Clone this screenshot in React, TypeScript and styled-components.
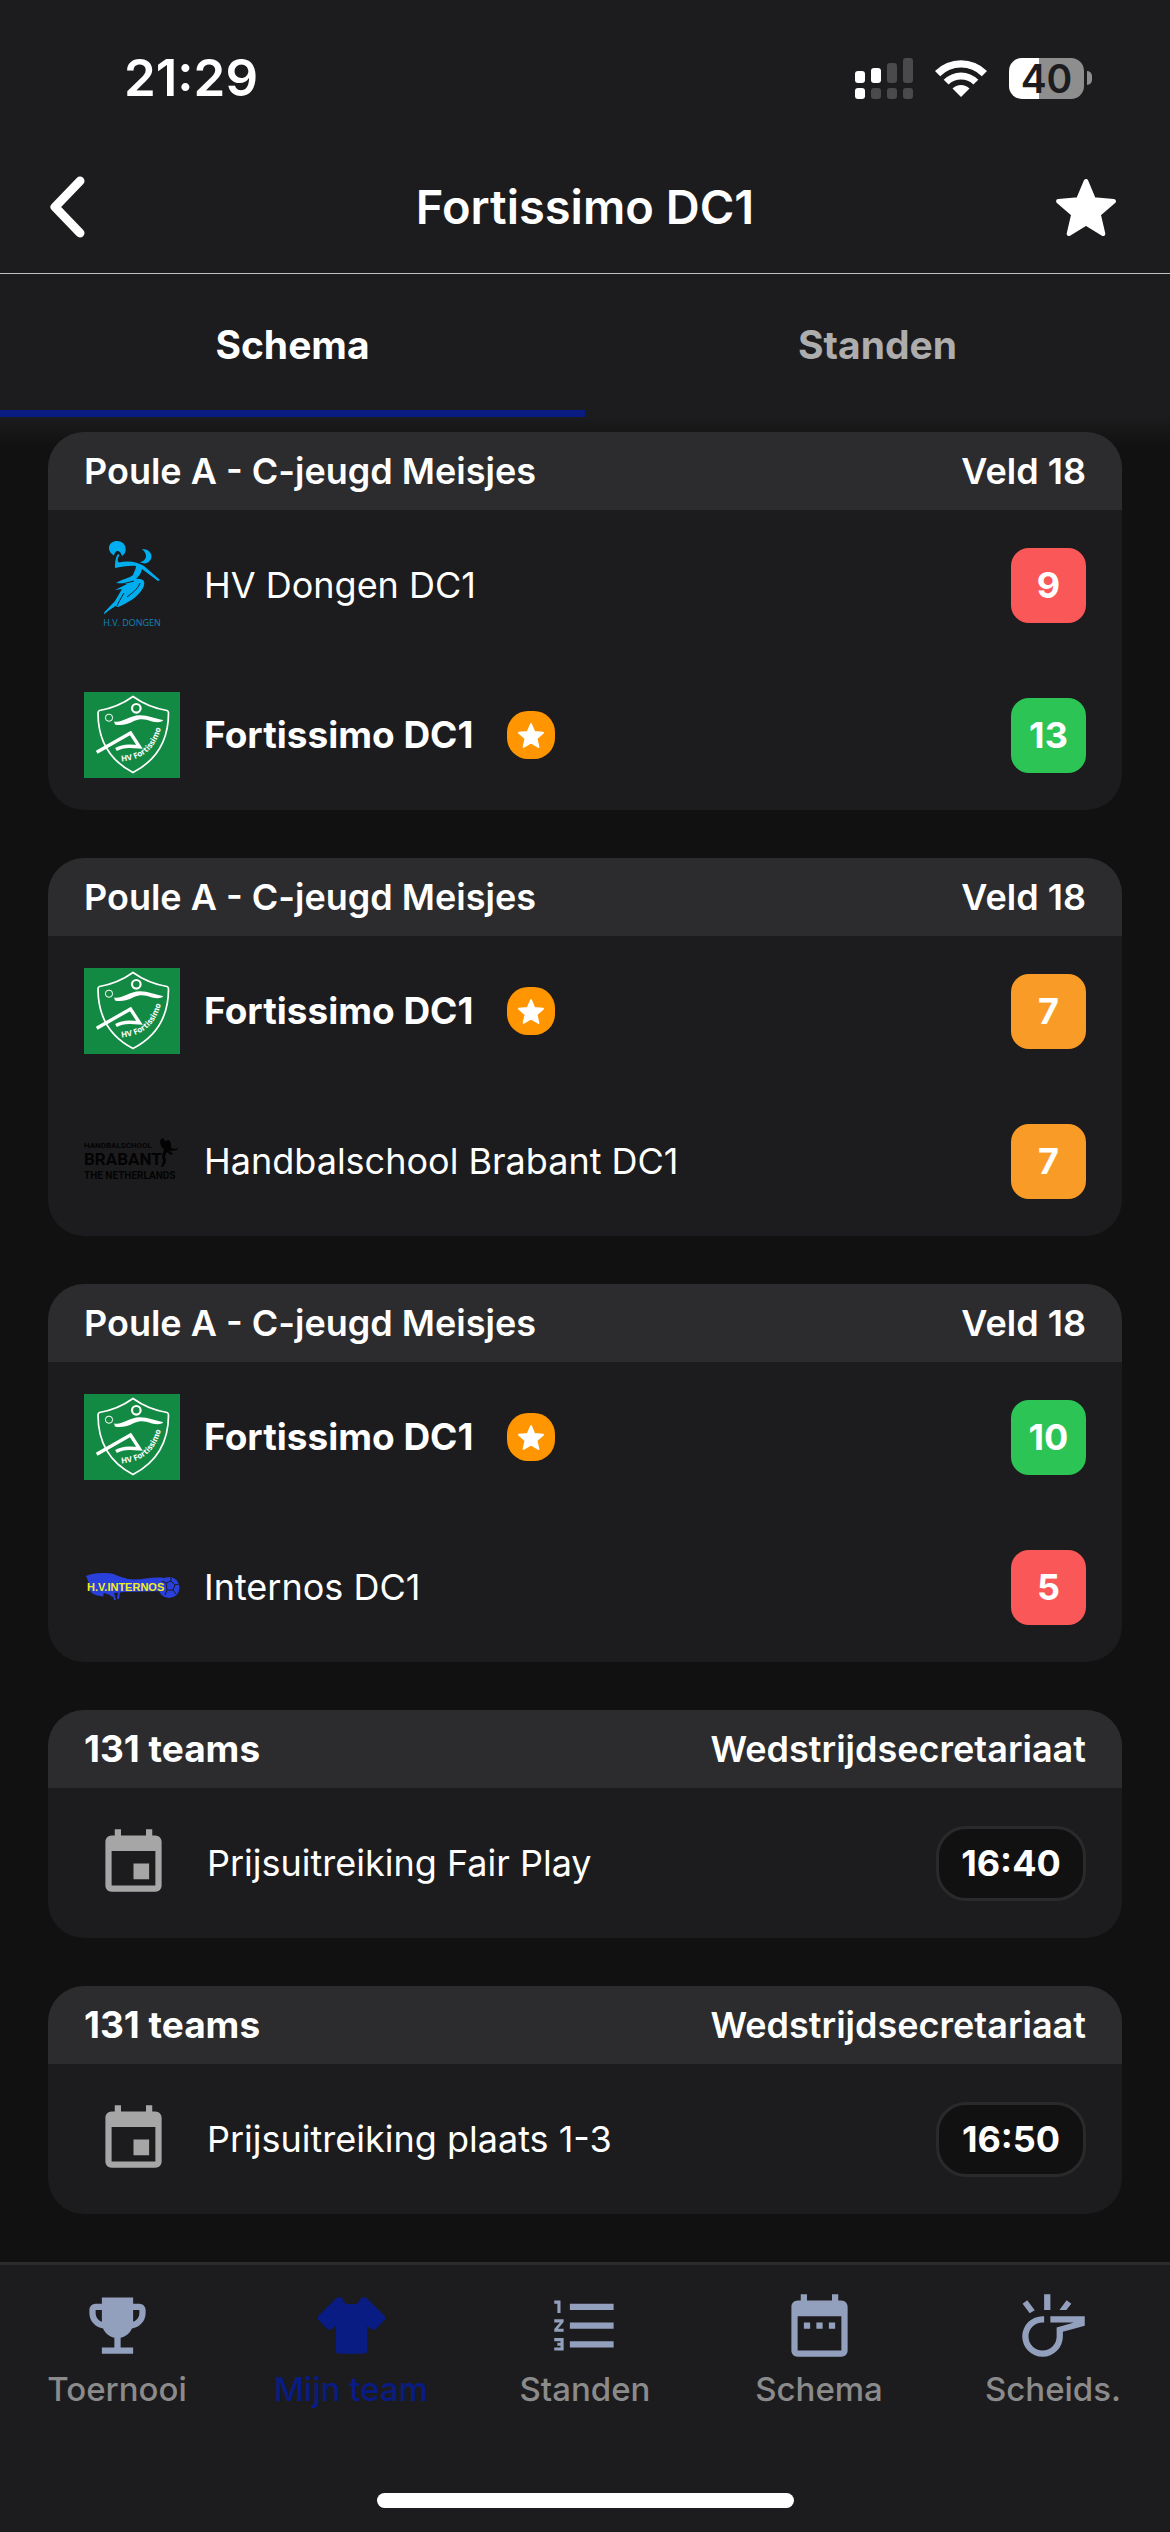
import React from "react";
import styled, { createGlobalStyle } from "styled-components";

const color = {
  page: "#111111",
  surface: "#1c1c1e",
  raised: "#2c2c2e",
  accent: "#081c84",
  text: "#ffffff",
  muted: "#adadad",
  navText: "#8b8b8b",
  navIcon: "#93a0bd",
};

const GlobalStyle = createGlobalStyle`
  * { box-sizing: border-box; }
  body {
    margin: 0;
    background: ${color.page};
    color: ${color.text};
    font-family: Inter, "Liberation Sans", sans-serif;
    font-size: 36px;
    line-height: 48px;
  }
  button {
    margin: 0;
    padding: 0;
    border: 0;
    background: none;
    color: inherit;
    font: inherit;
    cursor: pointer;
  }
  svg { display: block; flex: none; }
`;

const Screen = styled.div`
  display: flex;
  flex-direction: column;
  min-height: 100vh;
`;

const Header = styled.header`
  background: ${color.surface};
  border-bottom: 1px solid #c0c0c0;
`;

const StatusBar = styled.div`
  display: flex;
  align-items: center;
  justify-content: space-between;
  padding: 48px 78px 33px 124px;
`;

const Clock = styled.time`
  font-size: 51px;
  line-height: 60px;
  font-weight: 600;
`;

const StatusIcons = styled.div`
  display: flex;
  align-items: center;
  gap: 22px;
`;

const Battery = styled.div`
  display: flex;
  align-items: center;
  gap: 3px;
`;

const BatteryLevel = styled.span<{ $level: number }>`
  width: 75px;
  border-radius: 13px;
  background: linear-gradient(90deg, #fff ${(p) => p.$level}%, #8e8e8e ${(p) => p.$level}%);
  color: ${color.surface};
  font-size: 39px;
  line-height: 41px;
  font-weight: 600;
  text-align: center;
`;

const BatteryTip = styled.span`
  width: 5px;
  height: 14px;
  border-radius: 0 7px 7px 0;
  background: #8e8e8e;
`;

const TitleBar = styled.div`
  display: grid;
  grid-template-columns: 72px 1fr 72px;
  align-items: center;
  height: 132px;
  padding: 0 48px;
`;

const Title = styled.h1`
  margin: 0;
  font-size: 47px;
  line-height: 60px;
  font-weight: 600;
  text-align: center;
`;

const IconButton = styled.button<{ $end?: boolean }>`
  display: flex;
  align-items: center;
  justify-content: ${(p) => (p.$end ? "flex-end" : "flex-start")};
  padding-right: ${(p) => (p.$end ? "6px" : "0")};
  height: 72px;
`;

const Tabs = styled.div`
  display: flex;
  background: ${color.surface};
`;

const Tab = styled.button<{ $active?: boolean }>`
  flex: 1;
  height: 143px;
  border-top: 6px solid transparent;
  border-bottom: 7px solid ${(p) => (p.$active ? color.accent : "transparent")};
  color: ${(p) => (p.$active ? color.text : color.muted)};
  font-size: 39px;
  font-weight: 700;
`;

const List = styled.main`
  flex: 1;
  display: flex;
  flex-direction: column;
  gap: 48px;
  padding: 15px 48px 48px;
  background: linear-gradient(${color.surface} 0, ${color.page} 30px);
`;

const Card = styled.article`
  border-radius: 36px;
  overflow: hidden;
  background: ${color.surface};
`;

const CardHeader = styled.header`
  display: flex;
  align-items: center;
  justify-content: space-between;
  height: 78px;
  padding: 0 36px;
  background: ${color.raised};
  font-weight: 600;
`;

const CardTitle = styled.h2<{ $strong?: boolean }>`
  margin: 0;
  font-size: ${(p) => (p.$strong ? "37px" : "36px")};
  font-weight: ${(p) => (p.$strong ? 700 : 600)};
`;

const Row = styled.div`
  display: flex;
  align-items: center;
  gap: 24px;
  height: 150px;
  padding: 0 36px;
`;

const LogoBox = styled.div`
  display: flex;
  justify-content: center;
  width: 96px;
`;

const EventIconBox = styled.div`
  padding: 0 12px;
`;

const Name = styled.span<{ $strong?: boolean }>`
  font-size: ${(p) => (p.$strong ? "37px" : "36px")};
  font-weight: ${(p) => (p.$strong ? 700 : 400)};
`;

const FavouriteBadge = styled.span`
  display: flex;
  align-items: center;
  justify-content: center;
  width: 48px;
  height: 48px;
  margin-left: 10px;
  border-radius: 21px;
  background: #ff9500;
`;

const scoreColor = { loss: "#fa5858", win: "#2bc455", draw: "#f99c27" };
type Result = keyof typeof scoreColor;

const Score = styled.span<{ $result: Result }>`
  width: 75px;
  margin-left: auto;
  border-radius: 18px;
  background: ${(p) => scoreColor[p.$result]};
  line-height: 75px;
  font-weight: 700;
  text-align: center;
`;

const StartTime = styled.time`
  width: 150px;
  margin-left: auto;
  border: 3px solid #2a2a2c;
  border-radius: 30px;
  background: ${color.page};
  line-height: 69px;
  font-weight: 700;
  text-align: center;
`;

const BottomBar = styled.footer`
  display: flex;
  flex-direction: column;
  align-items: center;
  gap: 83px;
  padding: 23px 0 24px;
  border-top: 3px solid ${color.raised};
  background: ${color.surface};
`;

const Nav = styled.nav`
  display: flex;
  width: 100%;
`;

const NavLink = styled.a<{ $active?: boolean }>`
  flex: 1 1 0;
  display: flex;
  flex-direction: column;
  align-items: center;
  gap: 5px;
  color: ${(p) => (p.$active ? color.accent : color.navText)};
  font-size: 33px;
  line-height: 42px;
  font-weight: 500;
  text-decoration: none;
  svg { fill: ${(p) => (p.$active ? color.accent : color.navIcon)}; }
`;

const HomeIndicator = styled.div`
  width: 417px;
  height: 15px;
  border-radius: 8px;
  background: #fff;
`;

const STAR = "M12 17.27L18.18 21l-1.64-7.03L22 9.24l-7.19-.61L12 2 9.19 8.63 2 9.24l5.46 4.73L5.82 21z";

function Star({ width }: { width: number }) {
  return (
    <svg width={width} height={Math.round(width * 0.954)} viewBox="1.2 1.2 21.6 20.6" fill="#fff" stroke="#fff" strokeWidth="1.6" strokeLinejoin="round" aria-hidden="true">
      <path d={STAR} />
    </svg>
  );
}

function Chevron() {
  return (
    <svg width="38" height="62" viewBox="0 0 38 62" fill="none" stroke="#fff" strokeWidth="9" strokeLinecap="round" strokeLinejoin="round" aria-hidden="true">
      <path d="M32 5L7 31l25 26" />
    </svg>
  );
}

function Signal() {
  const bars = [
    { top: 13, on: true },
    { top: 10, on: true },
    { top: 5, on: false },
    { top: 0, on: false },
  ];
  return (
    <svg width="58" height="41" viewBox="0 0 58 41" role="img" aria-label="Signaal">
      {bars.map((bar, i) => (
        <React.Fragment key={i}>
          <rect x={i * 16} y={bar.top} width="10" height={25 - bar.top} rx="3" fill={bar.on ? "#fff" : "#4a4a4c"} />
          <rect x={i * 16} y="30" width="10" height="11" rx="3" fill={i === 0 ? "#fff" : "#4a4a4c"} />
        </React.Fragment>
      ))}
    </svg>
  );
}

function Wifi() {
  return (
    <svg width="52" height="37" viewBox="0 0 52 37" fill="#fff" role="img" aria-label="Wifi">
      <path d="M0 11A37 37 0 0 1 52 11L46.8 16.2A29.5 29.5 0 0 0 5.2 16.2Z" />
      <path d="M8.7 19.7A24.5 24.5 0 0 1 43.3 19.7L38.4 24.6A17.5 17.5 0 0 0 13.6 24.6Z" />
      <path d="M17.5 28.5A12 12 0 0 1 34.5 28.5L26 37Z" />
    </svg>
  );
}

function Icon({ d, fill }: { d: string; fill?: string }) {
  return (
    <svg width="75" height="75" viewBox="0 0 24 24" fill={fill} aria-hidden="true">
      <path d={d} />
    </svg>
  );
}

const icons = {
  event:
    "M17 12h-5v5h5v-5zM16 1v2H8V1H6v2H5c-1.11 0-1.99.9-1.99 2L3 19c0 1.1.89 2 2 2h14c1.1 0 2-.9 2-2V5c0-1.1-.9-2-2-2h-1V1h-2zm3 18H5V8h14v11z",
  trophy:
    "M19 5h-2V3H7v2H5c-1.1 0-2 .9-2 2v1c0 2.55 1.92 4.63 4.39 4.94.63 1.5 1.98 2.63 3.61 2.96V19H7v2h10v-2h-4v-3.1c1.63-.33 2.98-1.46 3.61-2.96C19.08 12.63 21 10.55 21 8V7c0-1.1-.9-2-2-2zM5 8V7h2v3.82C5.84 10.4 5 9.3 5 8zm14 0c0 1.3-.84 2.4-2 2.82V7h2v1z",
  shirt:
    "M16 21H8A1 1 0 0 1 7 20V12.07L5.7 13.12C5.31 13.5 4.68 13.5 4.29 13.12L1.46 10.29C1.07 9.9 1.07 9.27 1.46 8.88L7.34 3H9C9.29 4.8 10.4 5.2 12 5.2C13.6 5.2 14.71 4.8 15 3H16.66L22.54 8.88C22.93 9.27 22.93 9.9 22.54 10.29L19.71 13.12C19.32 13.5 18.69 13.5 18.3 13.12L17 12.07V20A1 1 0 0 1 16 21Z",
  ranking:
    "M2 17h2v.5H3v1h1v.5H2v1h3v-4H2v1zm1-9h1V4H2v1h1v3zm-1 3h1.8L2 13.1v.9h3v-1H3.2L5 10.9V10H2v1zm5-6v2h14V5H7zm0 14h14v-2H7v2zm0-6h14v-2H7v2z",
  calendar:
    "M9 11H7v2h2v-2zm4 0h-2v2h2v-2zm4 0h-2v2h2v-2zm2-7h-1V2h-2v2H8V2H6v2H5c-1.11 0-1.99.9-1.99 2L3 20c0 1.1.89 2 2 2h14c1.1 0 2-.9 2-2V6c0-1.1-.9-2-2-2zm0 16H5V9h14v11z",
  whistle:
    "M9 2h2v5H9zM2.1 5L3.6 3.9 6 7.1 4.4 8.1zM13.9 7L16.2 3.9 17.7 5 16.1 7zM11 9H22v3.1L15 14v1.5A6.5 6.5 0 1 1 8.5 9H9v2H8.5A4.5 4.5 0 1 0 13 15.5V12.6L18.3 11.1V11H11z",
};

function DongenLogo() {
  return (
    <svg width="96" height="88" viewBox="0 0 96 88" fill="#00aeef" role="img" aria-label="HV Dongen">
      <path d="M30 14.5C22 10 24 0 33 0C43 0 44 12 38 15C36 8 31 9 30 14.5Z" />
      <path d="M34 13L35.500 14C33 18 33.500 20 35 21.500C44 19 54 21 60 25L76 39L74 40L58 28C57 33 54 36 52 38C60 37 62 41 59 47C54 56 44 62 34 66L31.500 65L24 70L20 73.500L20.500 71L31 60L38 48L31 49L43 43L32 42C38 38 46 37 49 34C50 31 52 28 52 25C46 24 37 26 31 27C31 23 31 17 34 13Z" />
      <path d="M58 8C65 8 69 13 67 18C65 22 61 24 56 21C62 20 65 14 58 8Z" />
      <path d="M40 52C37 57 34 62 33 65M56 42C54 48 48 52 43 56M34 44L50 40" fill="none" stroke={color.surface} strokeWidth="1" />
      <text x="48" y="85" fill="#1285b8" fontSize="9" textAnchor="middle" fontFamily="Open Sans, sans-serif">H.V. DONGEN</text>
    </svg>
  );
}

function FortissimoLogo() {
  const id = React.useId();
  return (
    <svg width="96" height="86" viewBox="0 0 96 86" fill="none" stroke="#fff" role="img" aria-label="HV Fortissimo">
      <rect width="96" height="86" fill="#138a43" stroke="none" />
      <path d="M49 4.500C40 11 27 16.500 15.500 18.500Q14 19 14 21C14 46 23 67 49 80.500C75 67 84.500 46 84.500 21Q84.500 19 83 18.500C71 16.500 58 11 49 4.500Z" strokeWidth="1.700" />
      <circle cx="52.300" cy="16.300" r="4.300" strokeWidth="2.200" />
      <circle cx="25" cy="25.700" r="3.600" strokeWidth="1" />
      <path d="M30 29.500C38 31.500 44 23.500 56 23.200C64 23.200 72 26.800 79 28C79 30 74 31 68 29.500C60 26.500 56 26.500 50 29C44 32.500 36 34 31 32.500Z" fill="#fff" stroke="none" />
      <path d="M12.700 60.300L46.500 41L55.500 54.800L46 54.200Q38 54 32 57.500" strokeWidth="3.400" />
      <path id={id} d="M37.500 69.500C56 68 71 59 77 36" stroke="none" />
      <text fill="#fff" stroke="none" fontSize="8" fontWeight="700" fontFamily="Open Sans, sans-serif">
        <textPath href={`#${id}`}>HV Fortissimo</textPath>
      </text>
    </svg>
  );
}

function BrabantLogo() {
  return (
    <svg width="96" height="48" viewBox="0 0 96 48" fill="#030303" fontWeight="700" fontFamily="Roboto, Liberation Sans, sans-serif" role="img" aria-label="Handbalschool Brabant The Netherlands">
      <text x="0" y="11" fontSize="8">HANDBALSCHOOL</text>
      <text x="0" y="28" fontSize="17">BRABANT</text>
      <text x="0" y="42" fontSize="10">THE NETHERLANDS</text>
      <path d="M77 2l2-1 2 3 4-1 2 3 0 5 4 1 3-1-1 2-5 1-3-1 4 4-2 1-4-3-2 4 1 6-3 5-2 0 2-6-1-5 2-6-3-4-1-4z" />
    </svg>
  );
}

function InternosLogo() {
  return (
    <svg width="96" height="28" viewBox="0 0 96 28" fill="#2a40dc" role="img" aria-label="HV Internos">
      <path d="M2 3C8 0 26-2 34 3L44 6C56 8 68 3 80 5L84 18 40 19 30 20C30 24 28 25 26 22L20 20C18 22 22 24 16 23C8 22 4 18 5 10Z" />
      <circle cx="85" cy="14.500" r="10.500" />
      <path d="M82 10l5-2 4 4-2 5-6 0zM87 8l0-4M91 12l4-1M89 17l3 4M83 17l-2 5M82 10l-4-2" fill="none" stroke={color.surface} strokeWidth="1" />
      <path d="M29 20l2 7M35 19l-1 7" stroke="#2a40dc" strokeWidth="2" />
      <text x="3" y="18" fill="#f2ee1c" fontSize="11" fontWeight="700" fontFamily="Liberation Sans, sans-serif">H.V.INTERNOS</text>
    </svg>
  );
}

type Team = { name: string; logo: () => React.JSX.Element; score: number; result: Result; favourite?: boolean };

const fortissimo = { name: "Fortissimo DC1", logo: FortissimoLogo, favourite: true };

const matches: Team[][] = [
  [
    { name: "HV Dongen DC1", logo: DongenLogo, score: 9, result: "loss" },
    { ...fortissimo, score: 13, result: "win" },
  ],
  [
    { ...fortissimo, score: 7, result: "draw" },
    { name: "Handbalschool Brabant DC1", logo: BrabantLogo, score: 7, result: "draw" },
  ],
  [
    { ...fortissimo, score: 10, result: "win" },
    { name: "Internos DC1", logo: InternosLogo, score: 5, result: "loss" },
  ],
];

const events = [
  { name: "Prijsuitreiking Fair Play", time: "16:40" },
  { name: "Prijsuitreiking plaats 1-3", time: "16:50" },
];

const navItems = [
  { label: "Toernooi", icon: icons.trophy },
  { label: "Mijn team", icon: icons.shirt, active: true },
  { label: "Standen", icon: icons.ranking },
  { label: "Schema", icon: icons.calendar },
  { label: "Scheids.", icon: icons.whistle },
];

function TeamRow({ team }: { team: Team }) {
  const Logo = team.logo;
  return (
    <Row>
      <LogoBox>
        <Logo />
      </LogoBox>
      <Name $strong={team.favourite}>{team.name}</Name>
      {team.favourite && (
        <FavouriteBadge>
          <Star width={26} />
        </FavouriteBadge>
      )}
      <Score $result={team.result}>{team.score}</Score>
    </Row>
  );
}

export default function App() {
  return (
    <Screen>
      <GlobalStyle />
      <Header>
        <StatusBar>
          <Clock>21:29</Clock>
          <StatusIcons>
            <Signal />
            <Wifi />
            <Battery>
              <BatteryLevel $level={40}>40</BatteryLevel>
              <BatteryTip />
            </Battery>
          </StatusIcons>
        </StatusBar>
        <TitleBar>
          <IconButton aria-label="Terug">
            <Chevron />
          </IconButton>
          <Title>Fortissimo DC1</Title>
          <IconButton $end aria-label="Favoriet">
            <Star width={60} />
          </IconButton>
        </TitleBar>
      </Header>
      <Tabs role="tablist">
        <Tab role="tab" aria-selected $active>
          Schema
        </Tab>
        <Tab role="tab" aria-selected={false}>
          Standen
        </Tab>
      </Tabs>
      <List>
        {matches.map((teams, i) => (
          <Card key={i}>
            <CardHeader>
              <CardTitle>Poule A - C-jeugd Meisjes</CardTitle>
              <span>Veld 18</span>
            </CardHeader>
            {teams.map((team) => (
              <TeamRow key={team.name} team={team} />
            ))}
          </Card>
        ))}
        {events.map((event) => (
          <Card key={event.name}>
            <CardHeader>
              <CardTitle $strong>131 teams</CardTitle>
              <span>Wedstrijdsecretariaat</span>
            </CardHeader>
            <Row>
              <EventIconBox>
                <Icon d={icons.event} fill="#a6a6a6" />
              </EventIconBox>
              <Name>{event.name}</Name>
              <StartTime>{event.time}</StartTime>
            </Row>
          </Card>
        ))}
      </List>
      <BottomBar>
        <Nav>
          {navItems.map((item) => (
            <NavLink key={item.label} href="#" $active={item.active} aria-current={item.active ? "page" : undefined}>
              <Icon d={item.icon} />
              {item.label}
            </NavLink>
          ))}
        </Nav>
        <HomeIndicator />
      </BottomBar>
    </Screen>
  );
}
